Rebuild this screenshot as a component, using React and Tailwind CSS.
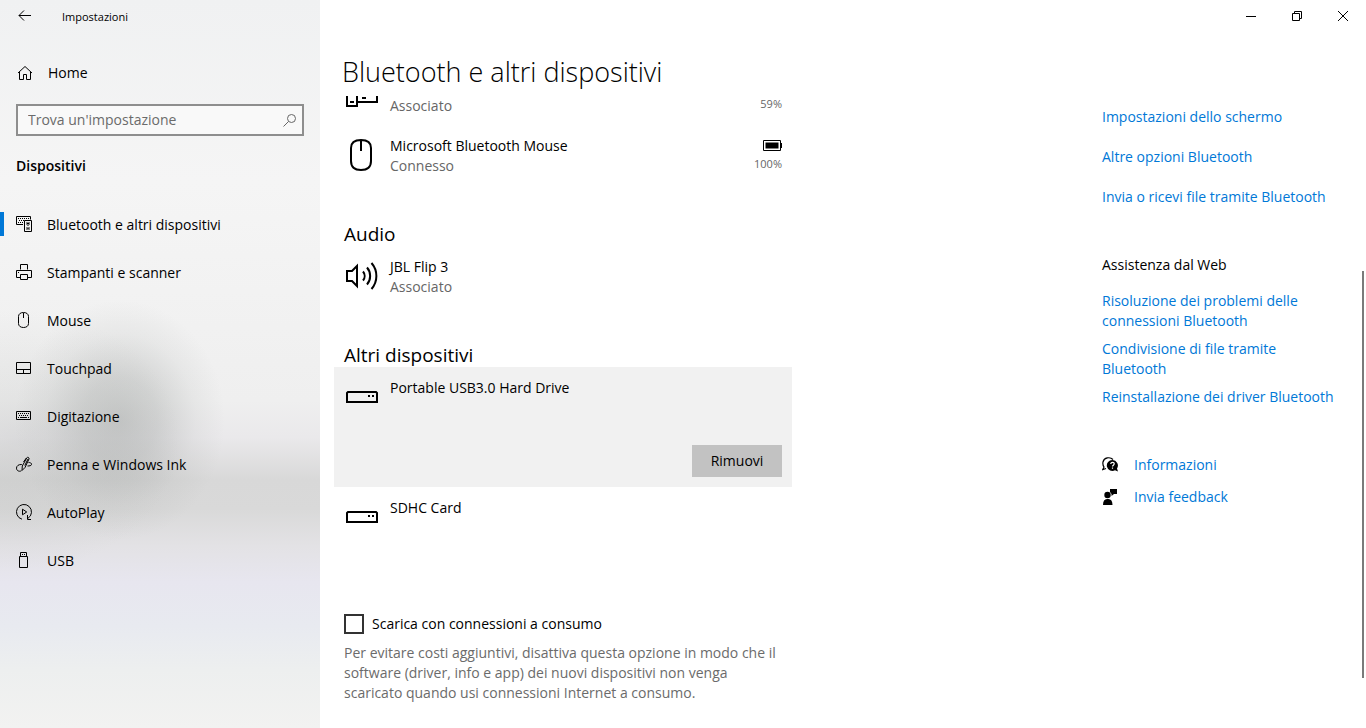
import React from 'react';

const navItems = [
  { id: 'bluetooth', label: 'Bluetooth e altri dispositivi', active: true },
  { id: 'printer', label: 'Stampanti e scanner' },
  { id: 'mouse', label: 'Mouse' },
  { id: 'touchpad', label: 'Touchpad' },
  { id: 'keyboard', label: 'Digitazione' },
  { id: 'pen', label: 'Penna e Windows Ink' },
  { id: 'autoplay', label: 'AutoPlay' },
  { id: 'usb', label: 'USB' },
];

const relatedLinks = [
  'Impostazioni dello schermo',
  'Altre opzioni Bluetooth',
  'Invia o ricevi file tramite Bluetooth',
];

const webLinks = [
  'Risoluzione dei problemi delle connessioni Bluetooth',
  'Condivisione di file tramite Bluetooth',
  'Reinstallazione dei driver Bluetooth',
];

const navShapes = {
  bluetooth: (
    <>
      <path d="M7 8.500H.5v-8h14v3" />
      <path d="M2 2.500h12M3 4.500h5M2 6.500h6" strokeDasharray="1 1" />
      <path d="M8.500 4.500h7v11h-7z" />
      <path d="M10 6h4v3h-4zM10 11h4v3h-4z" fill="#888" stroke="none" />
      <path d="M11 7.500h2M11.500 9.500h1M11.500 12.500h1" />
    </>
  ),
  printer: (
    <>
      <path d="M4.500 5.500v-5h7v5M4.500 13.500h-4v-7h15v7h-4" />
      <path d="M4.500 10.500h7v5h-7zM2 8.500h1" />
    </>
  ),
  mouse: (
    <path d="M7.500.5c-3 0-5 1.500-5 4v7c0 2.500 2 4 5 4s5-1.500 5-4v-7c0-2.500-2-4-5-4zM7.500 1v5" />
  ),
  touchpad: <path d="M.5 2.500h14v11H.5zM.5 9.500h14M7.500 9.500v4" />,
  keyboard: (
    <>
      <path d="M.5 3.500h14v8H.5z" />
      <path d="M2 5.500h11M3 7.500h10" strokeDasharray="1 1" />
      <path d="M2 9.500h1M4 9.500h7M12 9.500h1" />
    </>
  ),
  pen: (
    <>
      <path d="M6 14.500l.3-4.500 4.400-8c.8-1.400 2.900-.5 2.300 1L9 11.500zM8.800 9.500L12 3M10.500 1.800L7.500 6" />
      <path d="M5.800 8.500C2.500 8.300.7 9.800.5 12c-.2 2.500 2.500 4 4.800 2.800M12.500 6.500c1.700-.1 3.200.6 3 2-.2 1.300-2 1.400-4 1.500" />
    </>
  ),
  autoplay: <path d="M6 15.200A7.500 7.500 0 1 1 12 14.300M11.500 11v4.500H15M6.500 5.200v5.600l4.200-2.800z" />,
  usb: <path d="M3.500 4.500h8v11h-8zM4.500 4.500v-4h6v4M6 2.500h1M8 2.500h1" />,
};

function NavIcon({ id }) {
  return (
    <svg className="size-4 shrink-0" viewBox="0 0 16 16" fill="none" stroke="#000" aria-hidden="true">
      {navShapes[id]}
    </svg>
  );
}

function DriveIcon() {
  return (
    <svg className="size-8" viewBox="0 0 32 32" fill="none" stroke="#000" aria-hidden="true">
      <path d="M2 11h28l1 1v9H1v-9z" strokeWidth="2" />
      <path d="M22 15h2M26 15h2" strokeWidth="2" />
    </svg>
  );
}

function MouseIcon() {
  return (
    <svg className="size-8" viewBox="0 0 32 32" fill="none" stroke="#000" strokeWidth="2" aria-hidden="true">
      <path d="M15 1C9 1 5 3 5 9v13c0 6 4 9 10 9s10-3 10-9V9c0-6-4-8-10-8zM15 2v10" />
    </svg>
  );
}

function SpeakerIcon() {
  return (
    <svg className="size-8" viewBox="0 0 32 32" fill="none" stroke="#000" strokeWidth="2" aria-hidden="true">
      <path d="M1 11h5l5-5v20l-5-5H1zM17 11.500c2.200 2.600 2.200 6.400 0 9M21 7.500c4.200 4.800 4.200 12.200 0 17M25.500 3c6.500 7.500 6.500 18.500 0 26" />
    </svg>
  );
}

function KeyboardIcon() {
  return (
    <svg className="size-8" viewBox="0 0 32 32" fill="none" stroke="#000" strokeWidth="2" aria-hidden="true">
      <path d="M1 8v19h10V16M31 8v15H11M4 23h4M16 19h4" />
    </svg>
  );
}

function HelpIcon() {
  return (
    <svg className="size-4 shrink-0" viewBox="0 0 16 16" fill="none" aria-hidden="true">
      <path d="M11 2.500C8-.5 2 .5 1 5c-.4 2 0 3.500 1 5L.8 12.500 4 11.500" stroke="#000" strokeWidth="1.200" />
      <path d="M10.500 3a5.500 5.500 0 1 0 2.500 10.300l3 1.200-1-3A5.500 5.500 0 0 0 10.500 3z" fill="#000" />
      <path d="M8.800 7c0-2.300 3.600-2.100 3.400 0-.1 1.200-1.600 1.200-1.700 2.500M10.500 10.500v1.200" stroke="#fff" strokeWidth="1.200" />
    </svg>
  );
}

function FeedbackIcon() {
  return (
    <svg className="size-4 shrink-0" viewBox="0 0 16 16" aria-hidden="true">
      <circle cx="5.500" cy="6" r="3.200" />
      <path d="M1 16c0-4 1.500-6 4-6h1.500c2.500 0 4 2 4 6zM8 0h7v5h-3l-2.500 2V5L8 3z" />
    </svg>
  );
}

function Battery({ level }) {
  return (
    <div className="flex flex-col items-end">
      <svg className="h-5 w-[19px]" viewBox="0 0 19 20" aria-hidden="true">
        <path d="M.5 4.500h17v10H.5z" fill="none" stroke="#000" />
        <path d="M18 7h1v5h-1z" />
        <path d="M2.500 6.500h13v6h-13z" />
      </svg>
      <span className="text-[11px] leading-4 text-[#666]">{level}</span>
    </div>
  );
}

function Device({ icon, name, status, level }) {
  return (
    <div className="flex h-15 items-start pt-[11px] pr-2.5 pl-3">
      <div className="w-11 pt-[3px]">{icon}</div>
      <div className="grow">
        <p className="min-h-5">{name}</p>
        {status && <p className="text-[#666]">{status}</p>}
      </div>
      {level && <Battery level={level} />}
    </div>
  );
}

function SideLink({ children }) {
  return (
    <a href="#" className="text-[#0078d7] hover:text-[#666]">
      {children}
    </a>
  );
}

function CaptionButton({ label, path }) {
  return (
    <button type="button" aria-label={label} className="flex w-[46px] items-center justify-center">
      <svg className="size-2.5" viewBox="0 0 10 10" fill="none" stroke="#000" aria-hidden="true">
        <path d={path} />
      </svg>
    </button>
  );
}

export default function App() {
  return (
    <div className="flex h-screen overflow-hidden bg-white font-['Open_Sans','Noto_Sans',sans-serif] text-sm leading-5 text-black">
      <aside className="flex w-80 shrink-0 flex-col bg-[radial-gradient(ellipse_105px_120px_at_120px_420px,rgba(150,154,152,0.45),rgba(150,154,152,0.33)_35%,rgba(150,154,152,0.1)_72%,transparent),radial-gradient(ellipse_160px_130px_at_20px_440px,rgba(160,164,162,0.22),transparent),linear-gradient(180deg,#f0f1f2_0%,#f5f5f5_25%,#f2f2f2_40%,#efefef_55%,#eae9eb_60%,#d8d8d8_66%,#d9d9d9_70%,#e3e2e5_75%,#e7e6ef_80%,#e8eaf0_86%,#edefef_92%,#f2f2f1_100%)]">
        <header className="flex h-8 items-center">
          <button type="button" aria-label="Indietro" className="flex h-8 w-12 items-center justify-center">
            <svg className="h-3 w-[13px]" viewBox="0 0 13 12" fill="none" stroke="#000" aria-hidden="true">
              <path d="M13 5.500H1M6 .5l-5 5 5 5" />
            </svg>
          </button>
          <span className="pt-0.5 pl-3.5 text-[11px]">Impostazioni</span>
        </header>
        <a href="#" className="mt-5 flex h-10 items-center pt-0.5 pl-4">
          <svg className="size-4 shrink-0" viewBox="0 0 16 16" fill="none" stroke="#000" aria-hidden="true">
            <path d="M2 8l7-6.500L16 8M3.500 7v7.500h4v-5h3v5h4V7" />
          </svg>
          <span className="pl-4">Home</span>
        </a>
        <div className="mx-4 mt-3 flex h-8 items-center border-2 border-[#8e8e8e] bg-[#f9f9f9]">
          <input
            type="text"
            aria-label="Trova un'impostazione"
            placeholder="Trova un'impostazione"
            className="h-full min-w-0 grow bg-transparent pb-0.5 pl-2.5 outline-none placeholder:text-[#6b6b6b]"
          />
          <svg className="mr-1.5 size-[13px]" viewBox="0 0 13 13" fill="none" stroke="#666" aria-hidden="true">
            <circle cx="8.500" cy="4.500" r="4" />
            <path d="M5.500 7.500L.5 12.500" />
          </svg>
        </div>
        <h2 className="mt-5 px-4 font-semibold">Dispositivi</h2>
        <nav className="mt-6">
          {navItems.map((item) => (
            <a key={item.id} href="#" className="flex h-12 items-center">
              <span className={item.active ? 'h-6 w-1 bg-[#0078d7]' : 'h-6 w-1'} />
              <span className="flex w-[43px] pl-3">
                <NavIcon id={item.id} />
              </span>
              <span className="pt-0.5">{item.label}</span>
            </a>
          ))}
        </nav>
      </aside>

      <div className="flex min-w-0 grow flex-col">
        <div className="flex h-8 shrink-0 justify-end">
          <CaptionButton label="Riduci a icona" path="M0 5.500h10" />
          <CaptionButton label="Ripristina" path="M.5 2.500h7v7h-7zM2.500 2.500v-2h7v7h-2" />
          <CaptionButton label="Chiudi" path="M0 0l10 10M10 0L0 10" />
        </div>
        <h1 className="flex h-16 shrink-0 items-center pt-4 pl-[22px] text-[27px] font-light">
          Bluetooth e altri dispositivi
        </h1>
        <div className="flex min-h-0 grow">
          <main className="w-[472px] shrink-0 overflow-hidden pl-3.5">
            <div className="-mt-[31px]">
              <Device icon={<KeyboardIcon />} status="Associato" level="59%" />
              <Device icon={<MouseIcon />} name="Microsoft Bluetooth Mouse" status="Connesso" level="100%" />
            </div>
            <h3 className="mt-[37px] pl-2.5 text-[19px] leading-6">Audio</h3>
            <Device icon={<SpeakerIcon />} name="JBL Flip 3" status="Associato" />
            <h3 className="mt-[37px] pl-2.5 text-[19px] leading-6">Altri dispositivi</h3>
            <div className="bg-[#f1f1f1] pb-2.5">
              <Device icon={<DriveIcon />} name="Portable USB3.0 Hard Drive" />
              <div className="flex justify-end pt-[18px] pr-2.5">
                <button type="button" className="h-8 w-[90px] bg-[#c2c2c2]">
                  Rimuovi
                </button>
              </div>
            </div>
            <Device icon={<DriveIcon />} name="SDHC Card" />
            <label className="mt-[67px] flex items-center gap-2 pl-2.5">
              <input type="checkbox" className="size-5 appearance-none border-2 border-[#333] bg-white checked:bg-[#0078d7]" />
              Scarica con connessioni a consumo
            </label>
            <p className="mt-[9px] pr-2 pl-2.5 text-[#6b6b6b]">
              Per evitare costi aggiuntivi, disattiva questa opzione in modo che il software (driver, info e app) dei
              nuovi dispositivi non venga scaricato quando usi connessioni Internet a consumo.
            </p>
          </main>

          <aside className="ml-auto w-[260px] pt-[11px] pr-5">
            <div className="flex flex-col items-start gap-5">
              {relatedLinks.map((text) => (
                <SideLink key={text}>{text}</SideLink>
              ))}
            </div>
            <h4 className="mt-12">Assistenza dal Web</h4>
            <div className="mt-4 flex flex-col items-start gap-2">
              {webLinks.map((text) => (
                <SideLink key={text}>{text}</SideLink>
              ))}
            </div>
            <div className="mt-12 flex flex-col gap-3">
              <div className="flex items-center gap-4">
                <HelpIcon />
                <SideLink>Informazioni</SideLink>
              </div>
              <div className="flex items-center gap-4">
                <FeedbackIcon />
                <SideLink>Invia feedback</SideLink>
              </div>
            </div>
          </aside>
          <div className="w-1 pt-[175px]">
            <div className="h-[407px] w-0.5 bg-[#7a7a7a]" />
          </div>
        </div>
      </div>
    </div>
  );
}
